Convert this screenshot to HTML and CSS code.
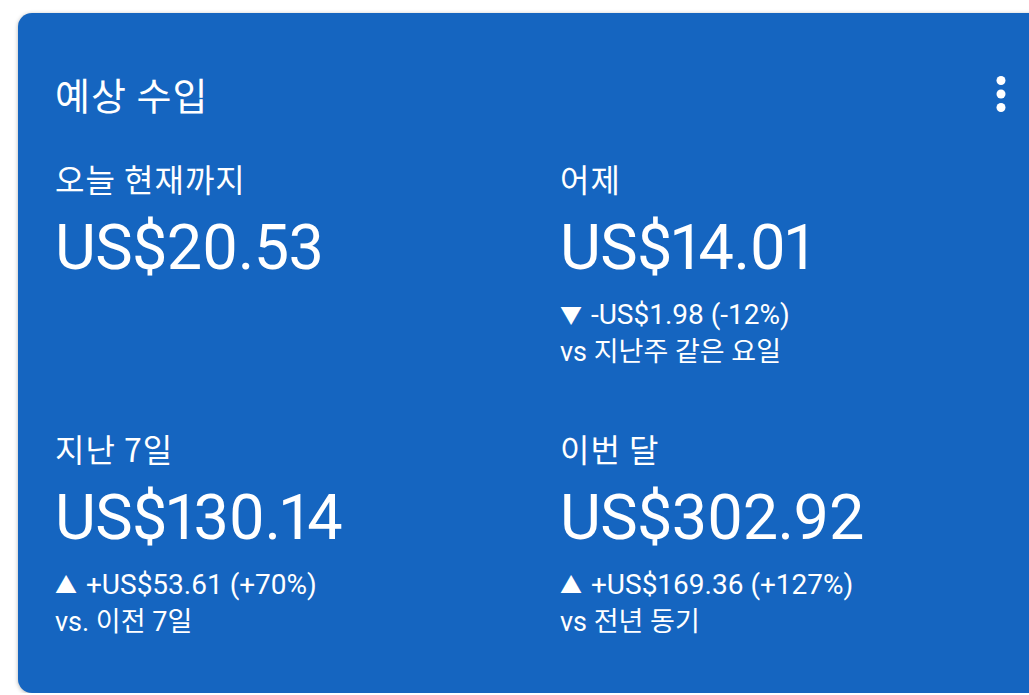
FILE: index.html
```html
<!doctype html>
<html>
  <head>
    <meta charset="utf-8">
    <title>예상 수입</title>
    <link rel="stylesheet" href="styles.css">
  </head>
  <body>
    <div class="card">
      <div class="card-head">
        <h1 class="title">예상 수입</h1>
        <svg class="menu" viewBox="0 0 24 24" width="54" height="54">
          <circle cx="12" cy="6" r="2" fill="#fff"/>
          <circle cx="12" cy="12" r="2" fill="#fff"/>
          <circle cx="12" cy="18" r="2" fill="#fff"/>
        </svg>
      </div>

      <div class="stats">
        <div class="stat">
          <div class="label">오늘 현재까지</div>
          <div class="value">US$20.53</div>
        </div>
        <div class="stat">
          <div class="label">어제</div>
          <div class="value">US$14.01</div>
          <div class="note delta"><span class="arrow">▼</span> -US$1.98 (-12%)</div>
          <div class="note">vs 지난주 같은 요일</div>
        </div>
        <div class="stat">
          <div class="label">지난 7일</div>
          <div class="value">US$130.14</div>
          <div class="note delta"><span class="arrow">▲</span> +US$53.61 (+70%)</div>
          <div class="note">vs. 이전 7일</div>
        </div>
        <div class="stat">
          <div class="label">이번 달</div>
          <div class="value">US$302.92</div>
          <div class="note delta"><span class="arrow">▲</span> +US$169.36 (+127%)</div>
          <div class="note">vs 전년 동기</div>
        </div>
      </div>
    </div>
  </body>
</html>
```

FILE: styles.css
```css
body {
  margin: 0;
  background: #fff;
  overflow: hidden;
  font-family: Roboto, "Noto Sans CJK KR", sans-serif;
  color: #fff;
}
.card {
  margin: 13px 0 0 18px;
  width: 1050px;
  height: 680px;
  box-sizing: border-box;
  padding: 58px 40px 0 37px;
  background: #1565c0;
  border-radius: 14px;
  box-shadow: 0 1px 4px rgba(0, 0, 0, 0.3);
}
.card-head {
  display: flex;
  justify-content: space-between;
  align-items: center;
  height: 46px;
}
.title {
  margin: 0;
  font-size: 38px;
  font-weight: 400;
  line-height: 46px;
  letter-spacing: 1px;
  font-family: "Noto Sans CJK KR", sans-serif;
}
.menu {
  display: block;
  flex: none;
}
.stats {
  display: grid;
  grid-template-columns: 505px 1fr;
  row-gap: 58px;
  margin-top: 41px;
}
.label {
  font-size: 32px;
  line-height: 40px;
  letter-spacing: 1px;
  font-family: "Noto Sans CJK KR", sans-serif;
}
.value {
  margin-top: 14px;
  font-size: 63px;
  line-height: 72px;
  letter-spacing: -0.6px;
  font-variant-numeric: proportional-nums;
}
.value + .note {
  margin-top: 13px;
}
.note {
  font-size: 27px;
  line-height: 36px;
}
.delta {
  font-size: 28px;
}
.arrow {
  font-size: 22px;
  margin-right: 2px;
  vertical-align: 1px;
}
```
